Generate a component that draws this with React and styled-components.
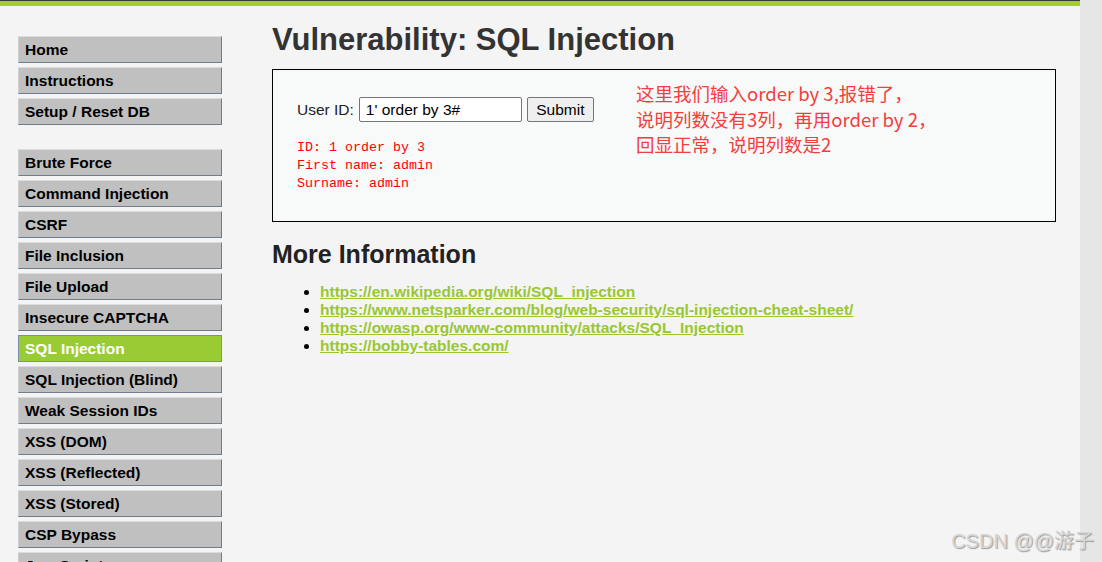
import React from "react";
import styled, { createGlobalStyle } from "styled-components";

const GlobalStyle = createGlobalStyle`
  html, body {
    margin: 0;
    padding: 0;
    background: #f4f4f4;
    font-family: "Liberation Sans", Arial, sans-serif;
  }
`;

const menuGroups = [
  ["Home", "Instructions", "Setup / Reset DB"],
  [
    "Brute Force",
    "Command Injection",
    "CSRF",
    "File Inclusion",
    "File Upload",
    "Insecure CAPTCHA",
    "SQL Injection",
    "SQL Injection (Blind)",
    "Weak Session IDs",
    "XSS (DOM)",
    "XSS (Reflected)",
    "XSS (Stored)",
    "CSP Bypass",
    "JavaScript",
  ],
];

const links = [
  "https://en.wikipedia.org/wiki/SQL_injection",
  "https://www.netsparker.com/blog/web-security/sql-injection-cheat-sheet/",
  "https://owasp.org/www-community/attacks/SQL_Injection",
  "https://bobby-tables.com/",
];

const App = () => {
  return (
    <S.Page>
      <GlobalStyle />
      <S.Window>
        <S.TopBar />
        <S.Body>
          <S.Sidebar>
            {menuGroups.map((group, gi) => (
              <S.MenuGroup key={gi}>
                {group.map((item) => (
                  <S.MenuItem key={item} $active={item === "SQL Injection"}>
                    {item}
                  </S.MenuItem>
                ))}
              </S.MenuGroup>
            ))}
          </S.Sidebar>
          <S.Main>
            <S.Title>Vulnerability: SQL Injection</S.Title>
            <S.VulnBox>
              <S.Form>
                <S.Label>User ID:</S.Label>
                <S.Input defaultValue="1' order by 3#" />
                <S.SubmitBtn type="button">Submit</S.SubmitBtn>
              </S.Form>
              <S.Result>
                {"ID: 1 order by 3\nFirst name: admin\nSurname: admin"}
              </S.Result>
              <S.Note>
                这里我们输入order by 3,报错了，
                <br />
                说明列数没有3列，再用order by 2，
                <br />
                回显正常，说明列数是2
              </S.Note>
            </S.VulnBox>
            <S.SubTitle>More Information</S.SubTitle>
            <S.LinkList>
              {links.map((l) => (
                <li key={l}>
                  <S.Link href="#">{l}</S.Link>
                </li>
              ))}
            </S.LinkList>
          </S.Main>
        </S.Body>
        <S.Watermark>CSDN @@游子</S.Watermark>
      </S.Window>
      <S.Gutter />
    </S.Page>
  );
};

export default App;

const S = {};

S.Page = styled.div`
  display: flex;
  height: 562px;
  overflow: hidden;
`;

S.Window = styled.div`
  position: relative;
  flex: 1;
  display: flex;
  flex-direction: column;
  background: #f4f4f4;
`;

S.Gutter = styled.div`
  width: 22px;
  flex-shrink: 0;
  background: #e6e6e6;
`;

S.TopBar = styled.div`
  flex-shrink: 0;
  height: 5px;
  border-top: 1px solid #3a3a3a;
  background: #a4cb33;
`;

S.Body = styled.div`
  display: flex;
  align-items: flex-start;
  flex-shrink: 0;
`;

S.Sidebar = styled.div`
  width: 204px;
  margin: 30px 0 0 18px;
  display: flex;
  flex-direction: column;
  gap: 24px;
`;

S.MenuGroup = styled.div`
  display: flex;
  flex-direction: column;
  gap: 4px;
`;

S.MenuItem = styled.div`
  height: 25px;
  box-sizing: content-box;
  line-height: 25px;
  padding-left: 6px;
  font-size: 15.5px;
  font-weight: bold;
  color: ${(p) => (p.$active ? "#ffffff" : "#000000")};
  background: ${(p) => (p.$active ? "#99cc33" : "#c0c0c0")};
  border: 1px solid;
  border-color: ${(p) =>
    p.$active ? "#7a8cae" : "#dcdcdc #6f7c8f #6f7c8f #d0d0d0"};
  white-space: nowrap;
`;

S.Main = styled.div`
  margin-left: 50px;
  width: 784px;
`;

S.Title = styled.h1`
  margin: 16px 0 0;
  font-size: 31px;
  line-height: 36px;
  font-weight: bold;
  color: #333333;
`;

S.VulnBox = styled.div`
  position: relative;
  margin-top: 11px;
  height: 124px;
  padding: 27px 24px 0;
  border: 1px solid #000;
  background: #f8f9f9;
`;

S.Form = styled.div`
  display: flex;
  align-items: center;
  gap: 5px;
  font-size: 15.5px;
  color: #222;
`;

S.Label = styled.span`
  margin-right: 0;
`;

S.Input = styled.input`
  width: 163px;
  height: 25px;
  box-sizing: border-box;
  border: 1px solid #767676;
  border-radius: 2px;
  padding: 1px 6px;
  font-family: "Liberation Sans", Arial, sans-serif;
  font-size: 15.5px;
  color: #000;
  background: #fff;
`;

S.SubmitBtn = styled.button`
  width: 67px;
  height: 25px;
  border: 1px solid #767676;
  border-radius: 2px;
  background: #efefef;
  font-family: "Liberation Sans", Arial, sans-serif;
  font-size: 15.5px;
  color: #000;
  padding: 0;
`;

S.Result = styled.pre`
  margin: 17px 0 0;
  font-family: "Liberation Mono", "Courier New", monospace;
  font-size: 13.33px;
  line-height: 18px;
  color: #ff0000;
`;

S.Note = styled.div`
  position: absolute;
  left: 363px;
  top: 11px;
  font-family: "Noto Sans CJK SC", sans-serif;
  font-size: 18.5px;
  line-height: 25.5px;
  color: #f53d3d;
  white-space: nowrap;
`;

S.SubTitle = styled.h2`
  margin: 17px 0 0;
  font-size: 25px;
  line-height: 30px;
  font-weight: bold;
  color: #222222;
`;

S.LinkList = styled.ul`
  margin: 14px 0 0;
  padding-left: 48px;
  font-size: 15.5px;
  line-height: 18px;
  li::marker {
    color: #000;
  }
`;

S.Link = styled.a`
  color: #98c732;
  font-weight: bold;
  text-decoration: underline;
`;

S.Watermark = styled.div`
  position: absolute;
  right: -14px;
  bottom: 8px;
  font-family: "Liberation Sans", "Noto Sans CJK SC", sans-serif;
  font-size: 20px;
  color: #d6d6d6;
  text-shadow: 1px 1px 1px #9a9a9a;
  white-space: nowrap;
  z-index: 2;
`;
